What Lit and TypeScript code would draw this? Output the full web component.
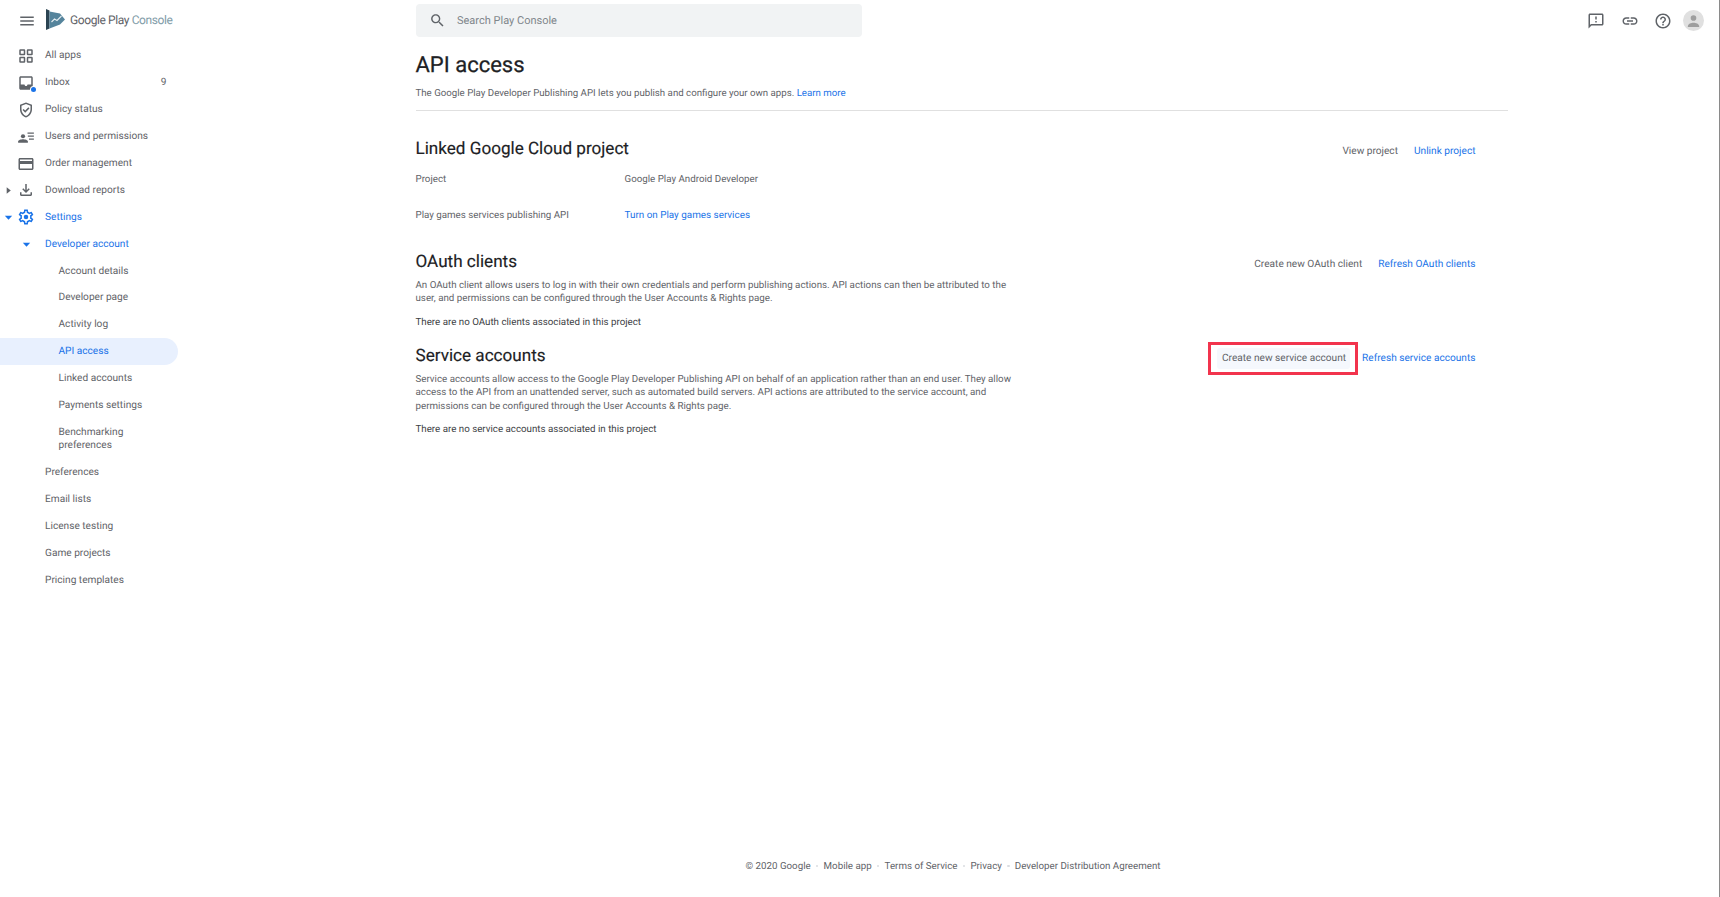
import { LitElement, html, css, svg } from "lit";
import { customElement } from "lit/decorators.js";

const P: Record<string, any> = {
  menu: svg`<path d="M3 18h18v-2H3v2zm0-5h18v-2H3v2zm0-7v2h18V6H3z"/>`,
  apps: svg`<path d="M4.500 3h5A1.500 1.500 0 0 1 11 4.500v5A1.500 1.500 0 0 1 9.500 11h-5A1.500 1.500 0 0 1 3 9.500v-5A1.500 1.500 0 0 1 4.500 3zM5 5v4h4V5H5zm9.500-2h5A1.500 1.500 0 0 1 21 4.500v5a1.500 1.500 0 0 1-1.500 1.500h-5A1.500 1.500 0 0 1 13 9.500v-5A1.500 1.500 0 0 1 14.500 3zM15 5v4h4V5h-4zM4.500 13h5a1.500 1.500 0 0 1 1.500 1.500v5A1.500 1.500 0 0 1 9.500 21h-5A1.500 1.500 0 0 1 3 19.500v-5A1.500 1.500 0 0 1 4.500 13zM5 15v4h4v-4H5zm9.500-2h5a1.500 1.500 0 0 1 1.500 1.500v5a1.500 1.500 0 0 1-1.500 1.500h-5a1.500 1.500 0 0 1-1.500-1.500v-5a1.500 1.500 0 0 1 1.500-1.500zm.5 2v4h4v-4h-4z"/>`,
  inbox: svg`<path d="M19 3H5c-1.100 0-2 .9-2 2v14c0 1.100.9 2 2 2h14c1.100 0 2-.9 2-2V5c0-1.100-.9-2-2-2zm0 11h-4.990c0 1.100-.9 2-2 2s-2-.9-2-2H5V5h14v9z"/>`,
  policy: svg`<path d="M12 2L4 5v6.090c0 5.050 3.410 9.760 8 10.910 4.590-1.150 8-5.860 8-10.910V5l-8-3zm6 9.090c0 4-2.550 7.700-6 8.830-3.450-1.130-6-4.820-6-8.830v-4.700l6-2.250 6 2.250v4.700z"/><path d="M8.820 10.590L7.400 12l3.540 3.540 5.660-5.660-1.410-1.410-4.240 4.240z"/>`,
  users: svg`<circle cx="8" cy="11" r="2.800"/><path d="M1.500 19.500v-1.500c0-2 4-3 6.500-3s6.500 1 6.500 3v1.500h-13z"/><path d="M14 6h8.500v1.800H14zM14.500 10h8v1.800h-8zM16 14h6.500v1.800H16z"/>`,
  card: svg`<path d="M20 4H4c-1.110 0-1.990.89-1.990 2L2 18c0 1.110.89 2 2 2h16c1.110 0 2-.89 2-2V6c0-1.110-.89-2-2-2zm0 14H4v-6h16v6zm0-10H4V6h16v2z"/>`,
  download: svg`<path d="M18 15v3H6v-3H4v3c0 1.100.9 2 2 2h12c1.100 0 2-.9 2-2v-3h-2zm-1-4l-1.410-1.410L13 12.170V4h-2v8.170L8.410 9.590 7 11l5 5 5-5z"/>`,
  gear: svg`<path d="M19.430 12.980c.04-.32.07-.64.07-.98 0-.34-.03-.66-.07-.98l2.110-1.650c.19-.15.24-.42.12-.64l-2-3.460c-.09-.16-.26-.25-.44-.25-.06 0-.12.01-.17.03l-2.490 1c-.52-.4-1.080-.73-1.690-.98l-.38-2.650C14.460 2.180 14.250 2 14 2h-4c-.25 0-.46.18-.49.42l-.38 2.650c-.61.25-1.170.59-1.690.98l-2.490-1c-.06-.02-.12-.03-.18-.03-.17 0-.34.09-.43.25l-2 3.460c-.13.22-.07.49.12.64l2.110 1.650c-.04.32-.07.65-.07.98 0 .33.03.66.07.98l-2.110 1.650c-.19.15-.24.42-.12.64l2 3.460c.09.16.26.25.44.25.06 0 .12-.01.17-.03l2.490-1c.52.4 1.080.73 1.690.98l.38 2.650c.03.24.24.42.49.42h4c.25 0 .46-.18.49-.42l.38-2.650c.61-.25 1.170-.59 1.690-.98l2.490 1c.06.02.12.03.18.03.17 0 .34-.09.43-.25l2-3.460c.12-.22.07-.49-.12-.64l-2.110-1.650zm-1.980-1.710c.04.31.05.52.05.73 0 .21-.02.43-.05.73l-.14 1.130.89.7 1.080.84-.7 1.210-1.270-.51-1.040-.42-.9.68c-.43.32-.84.56-1.250.73l-1.060.43-.16 1.130-.2 1.350h-1.400l-.19-1.350-.16-1.130-1.060-.43c-.43-.18-.83-.41-1.230-.71l-.91-.7-1.060.43-1.270.51-.7-1.210 1.080-.84.89-.7-.14-1.130c-.03-.31-.05-.54-.05-.74s.02-.43.05-.73l.14-1.130-.89-.7-1.080-.84.7-1.210 1.270.51 1.040.42.9-.68c.43-.32.84-.56 1.250-.73l1.060-.43.16-1.130.2-1.350h1.390l.19 1.350.16 1.130 1.060.43c.43.18.83.41 1.230.71l.91.7 1.060-.43 1.270-.51.7 1.210-1.070.85-.89.7.14 1.130z"/><circle cx="12" cy="12" r="3"/>`,
  search: svg`<path d="M15.500 14h-.79l-.28-.27C15.410 12.590 16 11.110 16 9.500 16 5.910 13.090 3 9.500 3S3 5.910 3 9.500 5.910 16 9.500 16c1.610 0 3.090-.59 4.230-1.570l.27.28v.79l5 4.990L20.490 19l-4.990-5zm-6 0C7.010 14 5 11.990 5 9.500S7.010 5 9.500 5 14 7.010 14 9.500 11.990 14 9.500 14z"/>`,
  feedback: svg`<path d="M20 2H4c-1.100 0-1.990.9-1.990 2L2 22l4-4h14c1.100 0 2-.9 2-2V4c0-1.100-.9-2-2-2zm0 14H5.170L4 17.170V4h16v12zm-9-4h2v2h-2zm0-6h2v4h-2z"/>`,
  link: svg`<path d="M3.900 12c0-1.710 1.390-3.100 3.100-3.100h4V7H7c-2.760 0-5 2.240-5 5s2.240 5 5 5h4v-1.900H7c-1.710 0-3.100-1.390-3.100-3.100zM8 13h8v-2H8v2zm9-6h-4v1.900h4c1.710 0 3.100 1.390 3.100 3.100s-1.390 3.100-3.100 3.100h-4V17h4c2.760 0 5-2.240 5-5s-2.240-5-5-5z"/>`,
  help: svg`<path d="M11 18h2v-2h-2v2zm1-16C6.480 2 2 6.480 2 12s4.480 10 10 10 10-4.480 10-10S17.520 2 12 2zm0 18c-4.410 0-8-3.590-8-8s3.590-8 8-8 8 3.590 8 8-3.590 8-8 8zm0-14c-2.210 0-4 1.790-4 4h2c0-1.100.9-2 2-2s2 .9 2 2c0 2-3 1.750-3 5h2c0-2.250 3-2.500 3-5 0-2.210-1.790-4-4-4z"/>`,
  right: svg`<path d="M8 5l9 7-9 7z"/>`,
  down: svg`<path d="M4 8h16l-8 9z"/>`,
};

const icon = (n: string) =>
  html`<svg class="ic" viewBox="0 0 24 24" fill="currentColor" aria-hidden="true">${P[n]}</svg>`;

@customElement("app-root")
export class AppRoot extends LitElement {
  static styles = css`
    :host {
      display: block;
      height: 897px;
      width: 1720px;
      overflow: hidden;
      background: #fff;
      font-family: Roboto, "Liberation Sans", sans-serif;
      font-size: 9.75px;
      color: #5f6368;
      text-rendering: geometricPrecision;
    }
    * { box-sizing: border-box; }
    .app { display: flex; height: 100%; }
    .ic { width: 18px; height: 18px; display: block; flex: none; }
    a { color: #1a73e8; text-decoration: none; }

    aside { width: 177.500px; flex: none; display: flex; flex-direction: column; font-size: 10.150px; }
    .brand { height: 41px; display: flex; align-items: center; padding-left: 17.500px; flex: none; }
    .brand .logo { width: 20px; height: 22px; flex: none; margin: -2px 4px 0 10.500px; }
    .word { font-size: 12px; color: #5f6368; letter-spacing: -0.4px; margin-top: -2px; white-space: nowrap; }
    .word span { color: #7f9ca8; }
    nav { display: flex; flex-direction: column; padding-top: 1.500px; }
    .row { display: flex; align-items: center; min-height: 26.900px; padding-right: 14px; white-space: nowrap; }
    .tw { width: 16px; flex: none; display: flex; justify-content: center; }
    .tw .ic { width: 11px; height: 11px; }
    .slot { width: 20px; flex: none; display: flex; justify-content: center; position: relative; margin-right: 9px; }
    .count { margin-left: auto; margin-right: -3px; }
    .blue { color: #1a73e8; }
    .sub { padding-left: 45px; }
    .leaf { padding-left: 58.500px; }
    .leaf.two { white-space: normal; line-height: 13.500px; padding-top: 7px; padding-bottom: 6.500px; padding-right: 60px; }
    .active { background: #e8f0fe; color: #1a73e8; border-radius: 0 13.500px 13.500px 0; }
    .dot { position: absolute; width: 5px; height: 5px; border-radius: 50%; background: #1a73e8; right: 0; bottom: 0; box-shadow: 0 0 0 1px #fff; }
    .tray { width: 45px; flex: none; padding-left: 20.500px; }
    .tray .ic { width: 11px; height: 11px; }

    main { flex: 1; min-width: 0; display: flex; flex-direction: column; padding-left: 238px; }
    .top { display: flex; align-items: center; height: 41px; flex: none; }
    .search { width: 446px; height: 33px; background: #f1f3f4; border-radius: 4px; display: flex; align-items: center; padding-left: 13px; gap: 11.500px; color: #80868b; font-size: 11px; }
    .search .ic { width: 17px; height: 17px; color: #5f6368; }
    .tools { margin-left: auto; display: flex; align-items: center; padding-right: 15px; color: #5f6368; }
    .tools .ic { margin-right: 16px; }
    .tools .ic:nth-child(2) { margin-right: 15px; }
    .tools .ic:nth-child(3) { margin-right: 11.500px; }
    .avatar { width: 21px; height: 21px; border-radius: 50%; background: #e0e0e0; color: #9e9e9e; display: flex; align-items: center; justify-content: center; overflow: hidden; }
    .avatar svg { width: 17px; height: 17px; display: block; }

    .content { width: 1092px; flex: 1; display: flex; flex-direction: column; }
    h1 { font: 400 22px/30px Roboto, sans-serif; color: #202124; margin: 10px 0 0; -webkit-text-stroke: 0.25px #202124; }
    .lede { margin: 5.500px 0 0; line-height: 14px; font-size: 9.700px; }
    hr { border: 0; border-top: 1px solid #e0e0e0; margin: 9.500px 0 0; }
    .head { display: flex; justify-content: space-between; align-items: center; padding-right: 32px; height: 24px; }
    h2 { font: 400 17.100px/24px Roboto, sans-serif; color: #202124; margin: 0; -webkit-text-stroke: 0.15px #202124; }
    .acts { display: flex; align-items: center; gap: 16px; white-space: nowrap; margin-top: 6px; font-size: 10.150px; }
    .sec1 { margin-top: 25.500px; }
    .sec2 { margin-top: 26.500px; }
    .sec3 { margin-top: 13.500px; }
    .kv { display: grid; grid-template-columns: 209px 1fr; line-height: 14px; }
    .kv a { font-size: 9.900px; }
    .k1 { margin-top: 12.500px; }
    .k2 { margin-top: 22px; }
    .body { margin: 5.200px 0 0; line-height: 13.400px; width: 596px; }
    .none { margin: 10.500px 0 0; line-height: 14px; color: #3c4043; }
    .hl { border: 3px solid #f2344d; padding: 3px 5px 3px 6px; margin-right: -12px; display: block; height: 33px; }
    .hl span { display: flex; align-items: center; height: 21px; background: #f5f8fd; border-radius: 3px; padding: 0 4px 0 5px; color: #5f6368; }

    footer { margin-top: auto; display: flex; align-items: center; gap: 4.700px; height: 14px; margin-bottom: 24px; padding-left: 330px; white-space: nowrap; }
    footer i { width: 2.500px; height: 2.500px; border-radius: 50%; background: #dadce0; margin: 0 .5px; }
    .edge { width: 1px; flex: none; background: #8a8a8a; }
  `;

  render() {
    return html`<div class="app">
      <aside>
        <div class="brand">
          ${icon("menu")}
          <svg class="logo" viewBox="0 0 20 22" aria-hidden="true">
            <path d="M0 0l3.500 1.500v18L0 21z" fill="#2b4452"/>
            <path d="M3.500 2.500L14 4.500 19 10.500 14 15.500 3.500 19.500z" fill="#55849c"/>
            <path d="M5.500 13l3-3 2.500 1.500L15.500 7" fill="none" stroke="#e4edf1" stroke-width="1.100"/>
          </svg>
          <div class="word">Google Play <span>Console</span></div>
        </div>
        <nav>
          <div class="row"><span class="tw"></span><span class="slot">${icon("apps")}</span>All apps</div>
          <div class="row"><span class="tw"></span><span class="slot">${icon("inbox")}<b class="dot"></b></span>Inbox<span class="count">9</span></div>
          <div class="row"><span class="tw"></span><span class="slot">${icon("policy")}</span>Policy status</div>
          <div class="row"><span class="tw"></span><span class="slot">${icon("users")}</span>Users and permissions</div>
          <div class="row"><span class="tw"></span><span class="slot">${icon("card")}</span>Order management</div>
          <div class="row"><span class="tw">${icon("right")}</span><span class="slot">${icon("download")}</span>Download reports</div>
          <div class="row blue"><span class="tw">${icon("down")}</span><span class="slot">${icon("gear")}</span>Settings</div>
          <div class="row blue"><span class="tray">${icon("down")}</span>Developer account</div>
          <div class="row leaf">Account details</div>
          <div class="row leaf">Developer page</div>
          <div class="row leaf">Activity log</div>
          <div class="row leaf active">API access</div>
          <div class="row leaf">Linked accounts</div>
          <div class="row leaf">Payments settings</div>
          <div class="row leaf two">Benchmarking preferences</div>
          <div class="row sub">Preferences</div>
          <div class="row sub">Email lists</div>
          <div class="row sub">License testing</div>
          <div class="row sub">Game projects</div>
          <div class="row sub">Pricing templates</div>
        </nav>
      </aside>
      <main>
        <div class="top">
          <div class="search">${icon("search")}<span>Search Play Console</span></div>
          <div class="tools">
            ${icon("feedback")}${icon("link")}${icon("help")}
            <div class="avatar"><svg viewBox="0 0 24 24" fill="currentColor"><circle cx="12" cy="8.500" r="4"/><path d="M4 20c0-3.500 5-5 8-5s8 1.500 8 5v1H4z"/></svg></div>
          </div>
        </div>
        <div class="content">
          <h1>API access</h1>
          <p class="lede">The Google Play Developer Publishing API lets you publish and configure your own apps. <a>Learn more</a></p>
          <hr />
          <div class="head sec1"><h2>Linked Google Cloud project</h2><div class="acts"><span>View project</span><a>Unlink project</a></div></div>
          <div class="kv k1"><span>Project</span><span>Google Play Android Developer</span></div>
          <div class="kv k2"><span>Play games services publishing API</span><a>Turn on Play games services</a></div>
          <div class="head sec2"><h2>OAuth clients</h2><div class="acts"><span>Create new OAuth client</span><a>Refresh OAuth clients</a></div></div>
          <p class="body">An OAuth client allows users to log in with their own credentials and perform publishing actions. API actions can then be attributed to the user, and permissions can be configured through the User Accounts &amp; Rights page.</p>
          <p class="none">There are no OAuth clients associated in this project</p>
          <div class="head sec3"><h2>Service accounts</h2><div class="acts"><span class="hl"><span>Create new service account</span></span><a>Refresh service accounts</a></div></div>
          <p class="body">Service accounts allow access to the Google Play Developer Publishing API on behalf of an application rather than an end user. They allow access to the API from an unattended server, such as automated build servers. API actions are attributed to the service account, and permissions can be configured through the User Accounts &amp; Rights page.</p>
          <p class="none">There are no service accounts associated in this project</p>
        </div>
        <footer>
          <span>© 2020 Google</span><i></i><span>Mobile app</span><i></i><span>Terms of Service</span><i></i><span>Privacy</span><i></i><span>Developer Distribution Agreement</span>
        </footer>
      </main>
      <div class="edge"></div>
    </div>`;
  }
}
